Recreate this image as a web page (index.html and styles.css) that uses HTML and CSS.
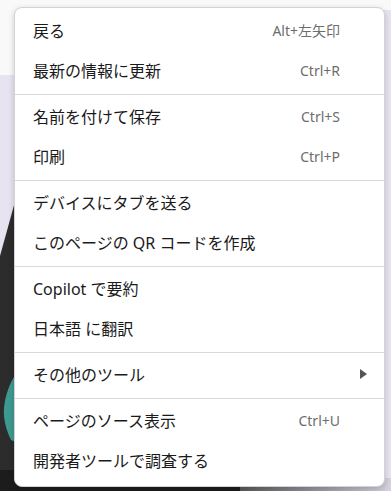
FILE: index.html
```html
<!DOCTYPE html>
<html lang="ja">
<head>
    <meta charset="utf-8">
    <title>コンテキストメニュー</title>
    <link rel="stylesheet" href="styles.css">
</head>
<body>
    <div class="page">
        <svg class="backdrop" width="391" height="491" viewBox="0 0 391 491">
            <rect x="0" y="0" width="391" height="491" fill="#e7e3f0"/>
            <rect x="0" y="0" width="391" height="10" fill="#f9f9f9"/>
            <rect x="0" y="0" width="200" height="75" fill="#f9f9f9"/>
            <polygon points="16,198 16,491 0,491 0,256" fill="#2c2c2c"/>
            <path d="M16,374 C10,382 5,396 4,408 C3,420 7,432 11,440 L16,442 Z" fill="#3e9a90"/>
            <rect x="0" y="470" width="240" height="21" fill="#1c1c1c"/>
            <rect x="240" y="478" width="151" height="13" fill="url(#fade)"/>
            <defs>
                <linearGradient id="fade" x1="0" x2="1" y1="0" y2="0">
                    <stop offset="0" stop-color="#5a5a5a"/>
                    <stop offset="1" stop-color="#d6d2de"/>
                </linearGradient>
            </defs>
        </svg>

        <div class="menu">
            <div class="item"><span class="label">戻る</span><span class="keys">Alt+左矢印</span></div>
            <div class="item"><span class="label">最新の情報に更新</span><span class="keys">Ctrl+R</span></div>
            <div class="sep"></div>
            <div class="item"><span class="label">名前を付けて保存</span><span class="keys">Ctrl+S</span></div>
            <div class="item"><span class="label">印刷</span><span class="keys">Ctrl+P</span></div>
            <div class="sep"></div>
            <div class="item"><span class="label">デバイスにタブを送る</span></div>
            <div class="item"><span class="label">このページの QR コードを作成</span></div>
            <div class="sep"></div>
            <div class="item"><span class="label">Copilot で要約</span></div>
            <div class="item"><span class="label">日本語 に翻訳</span></div>
            <div class="sep"></div>
            <div class="item"><span class="label">その他のツール</span><span class="arrow"></span></div>
            <div class="sep"></div>
            <div class="item"><span class="label">ページのソース表示</span><span class="keys">Ctrl+U</span></div>
            <div class="item"><span class="label">開発者ツールで調査する</span></div>
        </div>
    </div>
</body>
</html>
```

FILE: styles.css
```css
body {
    margin: 0;
    font-family: "Noto Sans", "Noto Sans CJK JP", sans-serif;
}

.page {
    position: relative;
    width: 391px;
    height: 491px;
    overflow: hidden;
}

.backdrop {
    display: block;
}

.menu {
    position: absolute;
    left: 14px;
    top: 7px;
    width: 371px;
    box-sizing: border-box;
    padding: 2px 0 6px;
    background-color: #fff;
    border: 1px solid #d4d2d8;
    border-radius: 8px;
    box-shadow: 0 2px 6px rgba(0, 0, 0, 0.18);
}

.item {
    display: flex;
    align-items: center;
    justify-content: space-between;
    height: 40px;
    padding: 0 44px 0 18px;
}

.label {
    font-size: 16px;
    color: #1a1a1a;
}

.keys {
    font-size: 14px;
    color: #6d6d6d;
}

.arrow {
    width: 0;
    height: 0;
    margin-right: -27px;
    border-top: 5px solid transparent;
    border-bottom: 5px solid transparent;
    border-left: 7px solid #555;
}

.sep {
    height: 1px;
    margin: 4px 0 1px;
    background-color: #d9d9d9;
}
```
